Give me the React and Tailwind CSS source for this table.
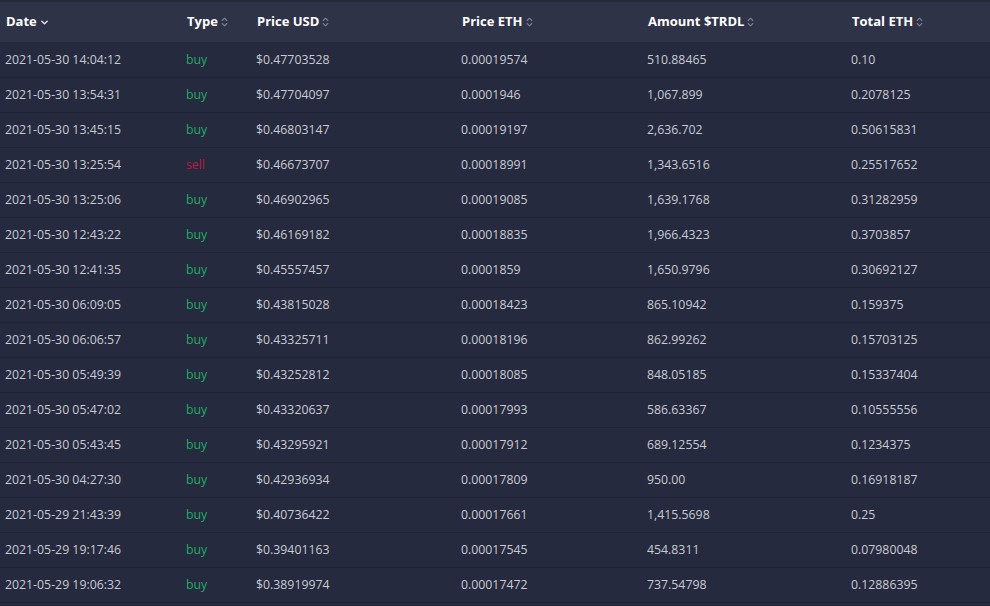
import React from 'react';

const rows = [
    ['2021-05-30 14:04:12', 'buy', '$0.47703528', '0.00019574', '510.88465', '0.10'],
    ['2021-05-30 13:54:31', 'buy', '$0.47704097', '0.0001946', '1,067.899', '0.2078125'],
    ['2021-05-30 13:45:15', 'buy', '$0.46803147', '0.00019197', '2,636.702', '0.50615831'],
    ['2021-05-30 13:25:54', 'sell', '$0.46673707', '0.00018991', '1,343.6516', '0.25517652'],
    ['2021-05-30 13:25:06', 'buy', '$0.46902965', '0.00019085', '1,639.1768', '0.31282959'],
    ['2021-05-30 12:43:22', 'buy', '$0.46169182', '0.00018835', '1,966.4323', '0.3703857'],
    ['2021-05-30 12:41:35', 'buy', '$0.45557457', '0.0001859', '1,650.9796', '0.30692127'],
    ['2021-05-30 06:09:05', 'buy', '$0.43815028', '0.00018423', '865.10942', '0.159375'],
    ['2021-05-30 06:06:57', 'buy', '$0.43325711', '0.00018196', '862.99262', '0.15703125'],
    ['2021-05-30 05:49:39', 'buy', '$0.43252812', '0.00018085', '848.05185', '0.15337404'],
    ['2021-05-30 05:47:02', 'buy', '$0.43320637', '0.00017993', '586.63367', '0.10555556'],
    ['2021-05-30 05:43:45', 'buy', '$0.43295921', '0.00017912', '689.12554', '0.1234375'],
    ['2021-05-30 04:27:30', 'buy', '$0.42936934', '0.00017809', '950.00', '0.16918187'],
    ['2021-05-29 21:43:39', 'buy', '$0.40736422', '0.00017661', '1,415.5698', '0.25'],
    ['2021-05-29 19:17:46', 'buy', '$0.39401163', '0.00017545', '454.8311', '0.07980048'],
    ['2021-05-29 19:06:32', 'buy', '$0.38919974', '0.00017472', '737.54798', '0.12886395'],
];

const columns = [
    { label: 'Date', width: 'w-[181px]', active: true },
    { label: 'Type', width: 'w-[70px]' },
    { label: 'Price USD', width: 'w-[205px]' },
    { label: 'Price ETH', width: 'w-[186px]' },
    { label: 'Amount $TRDL', width: 'w-[204px]' },
    { label: 'Total ETH', width: '' },
];

function SortIcon({ active }) {
    if (active) {
        return (
            <svg width="9" height="9" viewBox="0 0 10 10" className="ml-[3px] mt-[1px]">
                <path d="M2 3.5 L5 6.5 L8 3.5" fill="none" stroke="#e4e6ee" strokeWidth="1.5" strokeLinecap="round" strokeLinejoin="round" />
            </svg>
        );
    }
    return (
        <svg width="7" height="12" viewBox="0 0 7 12" className="ml-[3px]">
            <path d="M1.2 4.5 L3.5 2.2 L5.8 4.5" fill="none" stroke="#7d8294" strokeWidth="1.1" strokeLinecap="round" strokeLinejoin="round" />
            <path d="M1.2 7.5 L3.5 9.8 L5.8 7.5" fill="none" stroke="#7d8294" strokeWidth="1.1" strokeLinecap="round" strokeLinejoin="round" />
        </svg>
    );
}

export default function App() {
    return (
        <div className="w-[990px] h-[606px] overflow-hidden bg-[#252a3e] font-['Open_Sans',sans-serif] text-[12.3px]">
            <table className="w-full table-fixed border-collapse">
                <thead>
                    <tr className="h-[41px] bg-[#2e3347] border-t-2 border-[#262a3b]">
                        {columns.map((c) => (
                            <th key={c.label} className={`${c.width} pl-[6px] text-left text-[13px] font-bold text-white`}>
                                <span className="flex items-center">
                                    {c.label}
                                    <SortIcon active={c.active} />
                                </span>
                            </th>
                        ))}
                    </tr>
                </thead>
                <tbody>
                    {rows.map((r) => (
                        <tr key={r[0]} className="h-[35px] border-b border-[#1e2232]">
                            <td className="pl-[5px] pt-[2px] text-[#c9cbd4]">{r[0]}</td>
                            <td className={`pl-[5px] pt-[2px] ${r[1] === 'buy' ? 'text-[#1fae63]' : 'text-[#b3203f]'}`}>{r[1]}</td>
                            <td className="pl-[5px] pt-[2px] text-[#c9cbd4]">{r[2]}</td>
                            <td className="pl-[5px] pt-[2px] text-[#c9cbd4]">{r[3]}</td>
                            <td className="pl-[5px] pt-[2px] text-[#c9cbd4]">{r[4]}</td>
                            <td className="pl-[5px] pt-[2px] text-[#c9cbd4]">{r[5]}</td>
                        </tr>
                    ))}
                </tbody>
            </table>
        </div>
    );
}
